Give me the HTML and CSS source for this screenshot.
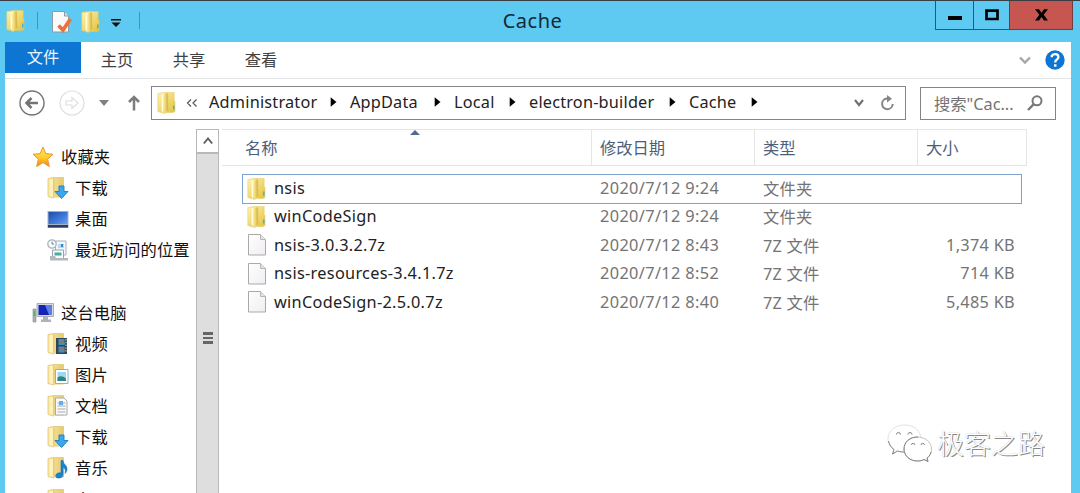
FILE: index.html
```html
<!DOCTYPE html>
<html lang="zh-CN">
<head>
<meta charset="utf-8">
<title>Cache</title>
<link rel="stylesheet" href="styles.css">
</head>
<body>
<svg class="defs" width="0" height="0">
  <defs>
    <linearGradient id="gold" x1="0" x2="1" y1="0" y2="1"><stop offset="0" stop-color="#fff3b0"/><stop offset="1" stop-color="#e2c03c"/></linearGradient>
    <linearGradient id="goldFront" x1="0" x2="1"><stop offset="0" stop-color="#fff4b4"/><stop offset=".45" stop-color="#f3de80"/><stop offset="1" stop-color="#d9b845"/></linearGradient>
    <linearGradient id="pale" x1="0" x2="1"><stop offset="0" stop-color="#fbe9a5"/><stop offset="1" stop-color="#e5c96f"/></linearGradient>
    <linearGradient id="paper" x1="0" x2="1" y1="0" y2="1"><stop offset="0" stop-color="#fff"/><stop offset="1" stop-color="#f0edf0"/></linearGradient>
    <linearGradient id="screen" x1="0" x2="1" y2="1"><stop offset="0" stop-color="#1d4ca8"/><stop offset=".6" stop-color="#3f7bdd"/><stop offset="1" stop-color="#6fa2ee"/></linearGradient>
    <linearGradient id="star" x2="0" y2="1"><stop offset="0" stop-color="#fff36b"/><stop offset=".6" stop-color="#ffc629"/><stop offset="1" stop-color="#f0801c"/></linearGradient>
    <symbol id="folder" viewBox="0 0 20 24">
      <path d="M.8 2.500 7 1.500h10.200v8l.8 1v10l-2 1H9l-1.500 1L.8 20.500z" fill="url(#gold)" stroke="#e3c861" stroke-width=".5"/>
      <path d="M5.500 3.500 10.500 2v17.500L6.500 22.500z" fill="url(#goldFront)"/>
      <path d="M4.500 3.500v15.500l1.500 3V5l1.500-1.500z" fill="#fffbd7"/>
      <path d="M10.700 3v16.500" stroke="#d0ad3c" stroke-width=".6"/>
      <path d="M16.800 14.500v4" stroke="#3bb0d4" stroke-width="1.400"/>
    </symbol>
    <symbol id="folderPale" viewBox="0 0 22 24">
      <path d="M1 2.500 7 1.500h9.500v19.500H8l-1.500 1L1 20.500z" fill="url(#pale)" stroke="#dfc777" stroke-width=".8"/>
      <path d="M2.500 3h4v18l-4-1z" fill="#fff1b8"/><path d="M6.800 2.500v18" stroke="#d6b85f" stroke-width=".8"/>
    </symbol>
    <symbol id="file" viewBox="0 0 20 24">
      <path d="M1.500 1.500h12l5 5v15.500h-17z" fill="url(#paper)" stroke="#aaa8ab"/>
      <path d="M13.500 1.500v5h5" fill="#e5e3e5" stroke="#b8b6b9"/>
    </symbol>
    <symbol id="arrowDown" viewBox="0 0 22 24"><path d="M12 10h5v5.500h4L14.500 22.500 8 15.500h4z" fill="#3aa8ef" stroke="#1b7dc2" stroke-width=".9"/></symbol>
    <symbol id="crumb" viewBox="0 0 7 10"><path d="M.7.3 6.500 5 .7 9.700z" fill="#000"/></symbol>
  </defs>
</svg>
<div class="window">
  <header class="titlebar">
    <div class="quick">
      <svg class="q-folder" width="20" height="24"><use href="#folder"/></svg>
      <i class="q-sep"></i>
      <svg class="q-props" width="22" height="24" viewBox="0 0 22 24"><path d="M1.500 1.500h12l4 4.500v16h-16z" fill="#fafafa" stroke="#8d9ba5"/><path d="M13.500 1.500v4.500h4" fill="#ddd" stroke="#8d9ba5"/><path d="M7.500 15.500 12 20l7.500-11" fill="none" stroke="#ee7138" stroke-width="3.800"/></svg>
      <svg class="q-folder2" width="20" height="24"><use href="#folder"/></svg>
      <svg class="q-more" width="10" height="8" viewBox="0 0 10 8"><path d="M0 0h10v1.500H0zM.5 3.500h9L5 8z" fill="#111"/></svg>
      <i class="q-sep"></i>
    </div>
    <h1 class="title">Cache</h1>
    <div class="controls">
      <button class="ctl ctl-min"><svg width="14" height="12"><path d="M0 7h14v4H0z"/></svg></button>
      <button class="ctl ctl-max"><svg width="14" height="12"><path d="M1.500 1.700h11v8.300h-11z" fill="none" stroke="#000" stroke-width="2.700"/></svg></button>
      <button class="ctl ctl-close"><svg width="13" height="12"><path d="M0 .3h4l2.500 3.500L9 .3h4L8.700 5.800 13 11.500H9L6.500 8 4 11.500H0l4.300-5.700z"/></svg></button>
    </div>
  </header>
  <div class="client">
    <nav class="ribbon">
      <a class="tab tab-file">文件</a><a class="tab">主页</a><a class="tab">共享</a><a class="tab">查看</a>
      <svg class="expand" width="12" height="9" viewBox="0 0 12 9"><path d="m1 1.500 5 5 5-5" fill="none" stroke="#a6a6a6" stroke-width="2.400"/></svg>
      <svg class="help" width="20" height="20" viewBox="0 0 20 20"><circle cx="10" cy="10" r="9.700" fill="#0d76d2"/><path d="M6.800 7.200V5.800Q8 4.200 10.200 4.200q3.200 0 3.200 2.700 0 1.500-1.500 2.500-1.600 1-1.600 2.500v.7" fill="none" stroke="#fff" stroke-width="2.300"/><path d="M9 14.300h2.500v2.400H9z" fill="#fff"/></svg>
    </nav>
    <div class="addressrow">
      <div class="navbtns">
        <svg class="nb" width="26" height="26" viewBox="0 0 26 26"><circle cx="13" cy="13" r="12" fill="none" stroke="#747474" stroke-width="1.400"/><path d="M7.500 13H19M12.500 8l-5 5 5 5" fill="none" stroke="#747474" stroke-width="2.500"/></svg>
        <svg class="nb nb-fwd" width="26" height="26" viewBox="0 0 26 26"><circle cx="13" cy="13" r="12" fill="none" stroke="#dedede" stroke-width="1.200"/><path d="M7 11h6V7.500l6 5.500-6 5.500V15H7z" fill="none" stroke="#dedede" stroke-width="1.200"/></svg>
        <svg class="nb-drop" width="10" height="6" viewBox="0 0 10 6"><path d="M0 0h10L5 6z" fill="#808080"/></svg>
        <svg class="nb-up" width="12" height="16" viewBox="0 0 12 16"><path d="M6 15.500V2M1 7l5-5 5 5" fill="none" stroke="#7c7c7c" stroke-width="2.500"/></svg>
      </div>
      <div class="address">
        <svg class="a-folder" width="20" height="24"><use href="#folder"/></svg>
        <svg class="a-back" width="12" height="8" viewBox="0 0 12 8"><path d="M5 .5 1.500 4 5 7.500M10.500.5 7 4l3.500 3.500" fill="none" stroke="#555" stroke-width="1.200"/></svg>
        <span class="seg seg-admin">Administrator<svg width="7" height="10"><use href="#crumb"/></svg></span>
        <span class="seg seg-app">AppData<svg width="7" height="10"><use href="#crumb"/></svg></span>
        <span class="seg seg-local">Local<svg width="7" height="10"><use href="#crumb"/></svg></span>
        <span class="seg seg-eb">electron-builder<svg width="7" height="10"><use href="#crumb"/></svg></span>
        <span class="seg seg-cache">Cache<svg width="7" height="10"><use href="#crumb"/></svg></span>
        <svg class="a-drop" width="10" height="8" viewBox="0 0 10 8"><path d="m1 1 4 5 4-5" fill="none" stroke="#707070" stroke-width="2.100"/></svg>
        <svg class="a-refresh" width="15" height="16" viewBox="0 0 15 16"><path d="M8.500 3.600H7A5.300 5.300 0 1 0 12.700 9" fill="none" stroke="#858585" stroke-width="2"/><path d="M7 0l5 3.700L7 7.400z" fill="#858585"/></svg>
      </div>
      <div class="search"><span>搜索"Cac...</span><svg width="16" height="16" viewBox="0 0 16 16"><circle cx="10" cy="5.800" r="4.500" fill="none" stroke="#777" stroke-width="2"/><path d="M6.800 9.200 1 15" stroke="#777" stroke-width="2.400"/></svg></div>
    </div>
    <div class="body">
      <aside class="tree">
        <div class="node root"><svg width="22" height="22" viewBox="0 0 22 22"><path d="m11 1 2.900 6.600 7.100.7-5.400 4.800L17.300 20.500 11 16.600l-6.300 3.900 1.700-7.400L1 8.300l7.100-.7z" fill="url(#star)" stroke="#ef922c"/></svg><span>收藏夹</span></div>
        <div class="node"><svg width="22" height="24"><use href="#folderPale"/><use href="#arrowDown"/></svg><span>下载</span></div>
        <div class="node"><svg width="22" height="24" viewBox="0 0 22 24"><path d="M.5 4h21v17H.5z" fill="#a4b1c4"/><path d="M1.500 5h19v12h-19z" fill="url(#screen)"/><path d="M1 18h20v2.500H1z" fill="#263c65"/></svg><span>桌面</span></div>
        <div class="node"><svg width="22" height="24" viewBox="0 0 22 24"><path d="M8.500 3h10.500v14H8.500z" fill="#f4f6f8" stroke="#a9b0b6"/><path d="M11 6h6v4h-6z" fill="#b7d8f3"/><path d="M14 6h2v3h-2z" fill="#278be0"/><path d="M5.500 12h11v9h-11z" fill="#f6faff" stroke="#9aa3aa"/><path d="M7.500 14.500h7v3h-7z" fill="#49ad9e"/><path d="M3 18h5l1 2h12v2.500H3z" fill="#b4b8bb"/><circle cx="5" cy="6" r="4.200" fill="#f7fbff" stroke="#a9b3ba" stroke-width="1.300"/><path d="M5 3.500V6h2" fill="none" stroke="#6b8798"/></svg><span>最近访问的位置</span></div>
        <div class="node root pc"><svg width="22" height="22" viewBox="0 0 22 22"><path d="M5 1.500h16.500v13H5z" fill="#d5d8df" stroke="#9ca0ab" stroke-width=".8"/><path d="M6.500 3H20v10H6.500z" fill="#1424b8"/><path d="m13 3 7 0v10h-3z" fill="#5d7ee6"/><path d="M11 15h5v2.500h3V20H9v-2.500h2z" fill="#afb2b8"/><path d="M1 7h3v13H1z" fill="#acb1b5" stroke="#81868b" stroke-width=".6"/><path d="M1.700 9h1.500v5H1.700z" fill="#4fb45b"/></svg><span>这台电脑</span></div>
        <div class="node"><svg width="22" height="24" viewBox="0 0 22 24"><use href="#folderPale"/><path d="M9 6h11v16H9z" fill="#344552"/><path d="M11.500 7h6v6h-6zM11.500 14.500h6v6h-6z" fill="#3793cb"/><path d="m12 12 3-3 2.500 3M12 19l3-3 2.500 3" fill="none" stroke="#9c7257" stroke-width="1.500"/><path d="M19 7v14" stroke="#d2dde3" stroke-dasharray="1.400 1.400"/></svg><span>视频</span></div>
        <div class="node"><svg width="22" height="24" viewBox="0 0 22 24"><use href="#folderPale"/><path d="M8.500 6.500h12.500v14H8.500z" fill="#fff" stroke="#9cadbb"/><path d="M10.500 9h8.500v9h-8.500z" fill="#9dd7f4"/><path d="M10.500 14.500q4-3 8.500 1V18h-8.500z" fill="#32847e"/></svg><span>图片</span></div>
        <div class="node"><svg width="22" height="24" viewBox="0 0 22 24"><use href="#folderPale"/><path d="M8.500 4h8.500l3 3v14H8.500z" fill="#fafafa" stroke="#aaa"/><path d="M10.500 9h8M10.500 12h8M10.500 15h8M10.500 18h8" stroke="#a3abb2"/><path d="M12 7h4v4h-4z" fill="#63aef1"/></svg><span>文档</span></div>
        <div class="node"><svg width="22" height="24"><use href="#folderPale"/><use href="#arrowDown"/></svg><span>下载</span></div>
        <div class="node"><svg width="22" height="24" viewBox="0 0 22 24"><use href="#folderPale"/><path d="M14 4.500h2c0 4 4.500 4.500 4 9-.3 2-1 3-2 4 1-4-.5-5.500-2-6v7c0 3-3 4-5.500 3.500S8.500 18.500 10 17.500s3-.7 4-.5z" fill="#1686d2" stroke="#0c63a4" stroke-width=".5"/></svg><span>音乐</span></div>
        <div class="node"><svg width="22" height="24"><use href="#folderPale"/></svg><span>桌面</span></div>
      </aside>
      <div class="scrollbar"><div class="sb-up"><svg width="10" height="8" viewBox="0 0 10 8"><path d="m.8 6.500 4.200-5 4.200 5" fill="none" stroke="#606060" stroke-width="1.900"/></svg></div><div class="sb-thumb"><i></i><i></i><i></i></div></div>
      <main class="list">
        <div class="cols head"><span>名称<svg class="sort" width="10" height="5" viewBox="0 0 10 5"><path d="m0 5 5-5 5 5z" fill="#526b8e"/></svg></span><span>修改日期</span><span>类型</span><span>大小</span></div>
        <div class="rows">
          <div class="row selected"><svg width="20" height="24"><use href="#folder"/></svg><span class="name">nsis</span><span class="date">2020/7/12 9:24</span><span class="type">文件夹</span><span class="size"></span></div>
          <div class="row"><svg width="20" height="24"><use href="#folder"/></svg><span class="name">winCodeSign</span><span class="date">2020/7/12 9:24</span><span class="type">文件夹</span><span class="size"></span></div>
          <div class="row"><svg width="20" height="24"><use href="#file"/></svg><span class="name">nsis-3.0.3.2.7z</span><span class="date">2020/7/12 8:43</span><span class="type">7Z 文件</span><span class="size">1,374 KB</span></div>
          <div class="row"><svg width="20" height="24"><use href="#file"/></svg><span class="name">nsis-resources-3.4.1.7z</span><span class="date">2020/7/12 8:52</span><span class="type">7Z 文件</span><span class="size">714 KB</span></div>
          <div class="row"><svg width="20" height="24"><use href="#file"/></svg><span class="name">winCodeSign-2.5.0.7z</span><span class="date">2020/7/12 8:40</span><span class="type">7Z 文件</span><span class="size">5,485 KB</span></div>
        </div>
      </main>
    </div>
  </div>
  <div class="watermark">
    <svg width="46" height="40" viewBox="0 0 46 40"><g fill="#fff" stroke="#858585" stroke-width="1"><path d="M17.500 2C8 2 1 8 1 15.500c0 5 2.500 8.500 6 11L5.500 31l5-3c3 1 7 1.500 10 1C33 28 35 22 34 14 32 6 26 2 17.500 2z" stroke="#e2e2e2"/><path d="M1.500 18c1 4 2.500 6.500 5.500 8.500L5.500 31l5-3c3 1 5 1 8 1" fill="none"/><path d="M30 14c-8 0-13 5-13 12s6 12 13.500 12c2.500 0 4.500-.5 6.500-1.500l4 2-1-3.500c3-2 4.500-5 4.500-9C44.500 19 38 14 30 14z" stroke="#c4c4c4"/><path d="M31 14c-8 0-14 5-14 12s6 12 13.500 12c2.500 0 4.500-.5 6.500-1.500l4 2-1-3.500c2-1.500 3.500-3.500 4-6" fill="none"/><path d="M9.500 11.500a2 2 0 0 1 4 0M21 11.500a2 2 0 0 1 4 0M24.500 22a1.700 1.700 0 0 1 3.400 0M34 22a1.700 1.700 0 0 1 3.400 0" fill="none"/></g></svg>
    <span>极客之路</span>
  </div>
</div>
</body>
</html>
```
FILE: styles.css
```css
* { box-sizing: border-box; }
body { margin: 0; overflow: hidden; font-family: "Noto Sans", "Noto Sans CJK SC", sans-serif; font-size: 16.3px; color: #1a1a1a; }
svg { display: block; flex: none; }
.defs { position: absolute; }
.window { position: relative; width: 1080px; height: 493px; background: #5ec9f1; border-top: 1px solid #383e43; display: flex; flex-direction: column; overflow: hidden; }
.titlebar { height: 41px; display: grid; grid-template-columns: 400px 1fr 400px; flex: none; }
.quick { display: flex; align-items: flex-start; padding: 8px 0 0 6px; }
.q-sep { width: 1px; height: 17px; background: #4b91ae; margin-top: 3px; }
.q-folder { margin-right: 11px; }
.q-props { margin: 1px 0 0 13px; }
.q-folder2 { margin: 1px 0 0 8px; }
.q-more { margin: 10px 18px 0 10px; }
.title { margin: 0; padding-right: 15px; text-align: center; font-size: 20px; letter-spacing: .5px; line-height: 40px; font-weight: 400; color: #112a35; }
.controls { display: flex; justify-content: flex-end; padding-right: 7px; }
.ctl { height: 29px; border: 1px solid #2b586d; border-top: 0; background: transparent; padding: 0; display: flex; align-items: center; justify-content: center; margin-left: -1px; }
.ctl-min { width: 39px; }
.ctl-max { width: 37px; }
.ctl-close { width: 64px; background: #c75650; border-color: #733b3b; }
.client { margin: 0 9px 0 5px; flex: 1; min-height: 0; background: #fff; display: flex; flex-direction: column; }
.ribbon { height: 37px; flex: none; border-bottom: 1px solid #e3e4e6; display: flex; align-items: center; }
.tab { width: 72px; text-align: center; color: #414141; line-height: 35px; }
.tab-file { width: 76px; height: 31px; line-height: 31px; background: #0d76d2; color: #e8f4ff; align-self: flex-start; }
.expand { margin-left: auto; margin-right: 14px; }
.help { margin-right: 6px; }
.addressrow { height: 50px; flex: none; display: flex; align-items: flex-start; padding-top: 7px; }
.navbtns { display: flex; align-items: center; width: 146px; height: 34px; padding-left: 14px; }
.nb-fwd { margin-left: 14px; }
.nb-drop { margin-left: 14px; }
.nb-up { margin-left: 19px; }
.address { width: 755px; height: 34px; border: 1px solid #858585; display: flex; align-items: center; padding-left: 5px; }
.a-back { margin: 0 11px 0 9px; }
.seg { display: flex; align-items: center; height: 28px; padding-right: 13px; margin-top: -2px; color: #222; letter-spacing: .2px; }
.seg svg { margin-left: auto; }
.seg-admin { width: 141px; }
.seg-app { width: 104px; }
.seg-local { width: 75px; }
.seg-eb { width: 160px; }
.seg-cache { width: 82px; }
.a-drop { margin-left: auto; margin-right: 16px; }
.a-refresh { margin-right: 10px; }
.search { width: 136px; height: 33px; margin: 1px 0 0 14px; border: 1px solid #858585; display: flex; align-items: center; justify-content: space-between; padding: 0 12px 2px 13px; color: #737373; }
.body { flex: 1; min-height: 0; display: flex; align-items: stretch; overflow: hidden; }
.tree { width: 191px; flex: none; padding-top: 12px; }
.node { height: 31.2px; display: flex; align-items: center; gap: 6px; padding-left: 42px; white-space: nowrap; color: #111; }
.node span { padding-bottom: 2px; letter-spacing: .1px; }
.root { padding-left: 27px; gap: 7px; }
.pc { margin-top: 31.2px; }
.scrollbar { width: 23px; flex: none; border: solid #b8b8b8; border-width: 1px 1px 0; background: #dedede; display: flex; flex-direction: column; }
.sb-up { height: 24px; flex: none; background: #fff; border-bottom: 2px solid #b8b8b8; display: flex; align-items: center; justify-content: center; }
.sb-thumb { flex: 1; padding-top: 178px; display: flex; flex-direction: column; align-items: center; gap: 2px; }
.sb-thumb i { width: 10px; height: 2.5px; background: #666; flex: none; }
.list { flex: 1; padding-left: 3px; }
.cols { display: grid; grid-template-columns: 370px 163px 163px 109px; width: 805px; height: 37px; border: solid #e5e5e5; border-width: 1px 0; color: #4c607a; }
.cols span { position: relative; display: flex; align-items: center; padding: 0 0 2px 8px; border-right: 1px solid #e5e5e5; }
.cols span:first-child { padding-left: 23px; }
.sort { position: absolute; left: 188px; top: 0; }
.rows { padding: 8px 0 0 20px; }
.row { width: 780px; height: 28.5px; display: grid; grid-template-columns: 20px 332px 163px 148px 105px; align-items: center; padding-left: 5px; white-space: nowrap; color: #747474; }
.row span { padding-bottom: 1px; }
.selected { box-shadow: inset 0 0 0 1px #7da2ce; height: 29.5px; margin-bottom: -1px; }
.row .name { padding-left: 7px; color: #222; letter-spacing: .3px; }
.date { padding-left: 1px; letter-spacing: .38px; }
.type { padding-left: 1px; letter-spacing: .2px; }
.size { text-align: right; letter-spacing: .3px; }
.watermark { position: absolute; left: 887px; top: 422px; display: flex; align-items: flex-start; gap: 4px; }
.watermark span { font-family: "Noto Sans CJK SC", sans-serif; font-weight: 300; font-size: 27px; line-height: 40px; color: #fff; text-shadow: 1px 1px 0 #888, 0 0 1px #bbb; }
```
